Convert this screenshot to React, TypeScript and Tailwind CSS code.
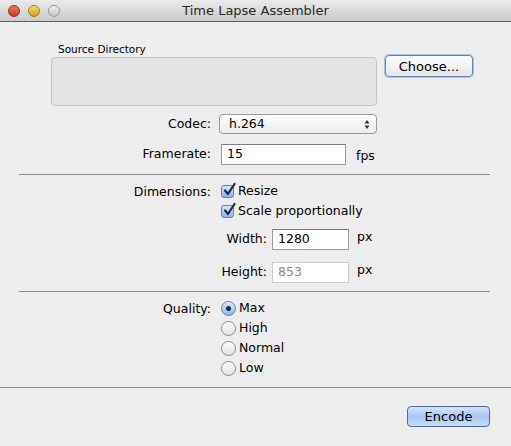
import React from 'react';

const font = { fontFamily: '"DejaVu Sans", "Lucida Grande", sans-serif' };

function Check() {
  return (
    <span className="relative w-[13px] h-[13px] rounded-[3px] border border-[#6b7fa8] bg-gradient-to-b from-[#d9e6fb] to-[#8fb2ea] shrink-0">
      <svg width="14" height="15" viewBox="0 0 14 15" className="absolute -top-[4px] left-[0px]">
        <path d="M3 8.5 L6 12 L12.5 2" fill="none" stroke="#1d2b4a" strokeWidth="2.2" strokeLinecap="round" strokeLinejoin="round" />
      </svg>
    </span>
  );
}

function Radio({ on }: { on?: boolean }) {
  return (
    <span
      className={
        'w-[15px] h-[15px] rounded-full border flex items-center justify-center shrink-0 ' +
        (on
          ? 'border-[#6b7fa8] bg-gradient-to-b from-[#dce8fc] to-[#93b5ec]'
          : 'border-[#8e8e8e] bg-gradient-to-b from-[#ffffff] to-[#e0e0e0]')
      }
    >
      {on && <span className="w-[5px] h-[5px] rounded-full bg-[#1d2b4a]" />}
    </span>
  );
}

export default function App() {
  return (
    <div className="w-[511px] h-[446px] bg-[#ededed] text-[12.5px] text-black overflow-hidden flex flex-col" style={font}>
      {/* title bar */}
      <div className="h-[22px] shrink-0 bg-gradient-to-b from-[#ebebeb] to-[#c9c9c9] border-b border-[#5c5c5c] flex items-center relative">
        <div className="flex items-center gap-[8px] pl-[8px]">
          <span className="w-[12px] h-[12px] rounded-full bg-gradient-to-b from-[#f0796c] to-[#c7362a] border border-[#9c2f25]" />
          <span className="w-[12px] h-[12px] rounded-full bg-gradient-to-b from-[#f8d96a] to-[#d49c1c] border border-[#a37a1a]" />
          <span className="w-[12px] h-[12px] rounded-full bg-gradient-to-b from-[#f2f2f2] to-[#c4c4c4] border border-[#9a9a9a]" />
        </div>
        <div className="absolute inset-0 flex items-center justify-center text-[13px] text-[#2a2a2a]">Time Lapse Assembler</div>
      </div>

      {/* source directory */}
      <div className="flex pt-[20px] pl-[51px]">
        <div className="flex flex-col">
          <div className="text-[10.5px] pl-[7px] h-[15px] leading-[15px]">Source Directory</div>
          <div className="w-[326px] h-[49px] bg-[#e3e3e3] border border-[#c4c4c4] rounded-[4px]" />
        </div>
        <button className="ml-[8px] mt-[13px] w-[88px] h-[22px] rounded-[4px] border border-[#6a84b8] bg-gradient-to-b from-[#ffffff] to-[#e6e6e6] shadow-[0_0_0_1px_#a9c0ea] text-[13px] leading-none">
          Choose...
        </button>
      </div>

      {/* codec / framerate */}
      <div className="grid grid-cols-[219px_auto] items-center mt-[8px]">
        <div className="text-right pr-[8px]">Codec:</div>
        <div className="w-[158px] h-[20px] rounded-[4px] border border-[#9a9a9a] bg-gradient-to-b from-[#ffffff] to-[#ececec] flex items-center justify-between pl-[9px] pr-[6px]">
          <span>h.264</span>
          <svg width="6" height="11" viewBox="0 0 6 11">
            <path d="M3 1 L5.5 4.5 H0.5 Z M3 10 L5.5 6.5 H0.5 Z" fill="#333" />
          </svg>
        </div>
        <div className="text-right pr-[8px] mt-[9px]">Framerate:</div>
        <div className="flex items-center mt-[9px] pl-[2px]">
          <div className="w-[125px] h-[21px] bg-white border border-[#9b9b9b] border-t-[#7d7d7d] flex items-center pl-[5px]">15</div>
          <span className="ml-[10px] mt-[4px]">fps</span>
        </div>
      </div>

      <div className="ml-[19px] w-[471px] h-px bg-[#8e8e8e] mt-[8px] shrink-0" />

      {/* dimensions */}
      <div className="grid grid-cols-[219px_auto] mt-[7px]">
        <div className="text-right pr-[8px] h-[20px] leading-[20px]">Dimensions:</div>
        <div className="flex flex-col pl-[2px]">
          <div className="flex items-center h-[20px] gap-[4px]">
            <Check />
            <span>Resize</span>
          </div>
          <div className="flex items-center h-[20px] gap-[4px]">
            <Check />
            <span>Scale proportionally</span>
          </div>
        </div>
      </div>
      <div className="grid grid-cols-[267px_auto] mt-[7px] gap-y-[12px] items-center">
        <div className="text-right">Width:</div>
        <div className="flex items-center pl-[5px]">
          <div className="w-[77px] h-[21px] bg-white border border-[#9b9b9b] border-t-[#7d7d7d] flex items-center pl-[5px]">1280</div>
          <span className="ml-[8px] -mt-[4px]">px</span>
        </div>
        <div className="text-right">Height:</div>
        <div className="flex items-center pl-[5px]">
          <div className="w-[77px] h-[21px] bg-white border border-[#cccccc] flex items-center pl-[5px] text-[#8a8a8a]">853</div>
          <span className="ml-[8px] -mt-[4px]">px</span>
        </div>
      </div>

      <div className="ml-[19px] w-[471px] h-px bg-[#8e8e8e] mt-[8px] shrink-0" />

      {/* quality */}
      <div className="grid grid-cols-[219px_auto] mt-[7px]">
        <div className="text-right pr-[8px] h-[20px] leading-[20px]">Quality:</div>
        <div className="flex flex-col pl-[2px]">
          {['Max', 'High', 'Normal', 'Low'].map((q, i) => (
            <div key={q} className="flex items-center h-[20px] gap-[3px]">
              <Radio on={i === 0} />
              <span>{q}</span>
            </div>
          ))}
        </div>
      </div>

      <div className="w-full h-px bg-[#8e8e8e] mt-[8px] shrink-0" />

      <div className="flex justify-end pr-[21px] mt-[18px]">
        <button className="w-[83px] h-[21px] rounded-[4px] border border-[#4f6aa3] bg-gradient-to-b from-[#d6e4fb] via-[#a9c6f4] to-[#c9dcfb] text-[13px] leading-none">
          Encode
        </button>
      </div>
    </div>
  );
}
